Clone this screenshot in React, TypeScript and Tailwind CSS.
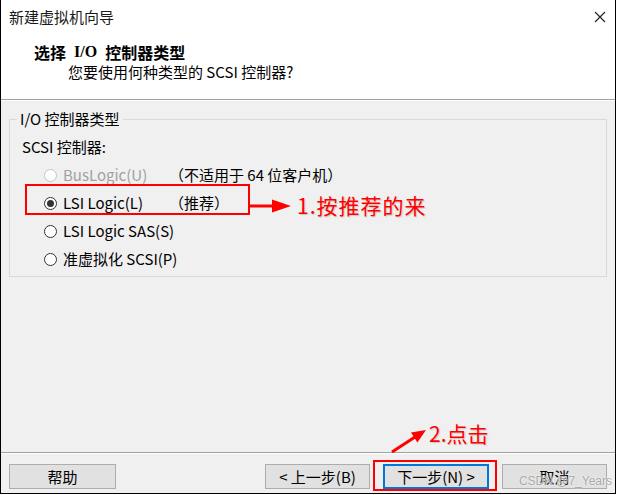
import React from "react";

function Radio({ checked, disabled }: { checked?: boolean; disabled?: boolean }) {
  return (
    <span
      className={`flex h-[13px] w-[13px] shrink-0 items-center justify-center rounded-full border bg-white ${
        disabled ? "border-[#c4c4c4]" : "border-[#333333]"
      }`}
    >
      {checked && <span className="h-[7px] w-[7px] rounded-full bg-[#333333]" />}
    </span>
  );
}

function Option({
  label,
  note,
  checked,
  disabled,
}: {
  label: string;
  note?: string;
  checked?: boolean;
  disabled?: boolean;
}) {
  return (
    <div className="flex h-[28px] items-center whitespace-nowrap pl-[34px]">
      <Radio checked={checked} disabled={disabled} />
      <span
        className={`ml-[6px] w-[106px] shrink-0 ${disabled ? "text-[#a0a0a0]" : "text-black"}`}
      >
        {label}
      </span>
      {note && <span className="text-black">{note}</span>}
    </div>
  );
}

function Button({ children, className }: { children: React.ReactNode; className?: string }) {
  return (
    <button
      type="button"
      className={`flex h-[25px] items-center justify-center bg-[#e1e1e1] text-[15px] text-black ${className}`}
    >
      {children}
    </button>
  );
}

export default function App() {
  return (
    <div className="min-h-screen bg-white">
      <div className="relative flex h-[494px] w-[616px] flex-col border-x border-b border-black bg-[#f0f0f0] font-['Noto_Sans_CJK_SC',sans-serif] text-[15px] leading-[20px]">
        {/* title bar */}
        <div className="flex h-[34px] items-center justify-between bg-white pl-[8px] pr-[9px]">
          <span className="text-[#1a1a1a]">新建虚拟机向导</span>
          <svg width="12" height="12" viewBox="0 0 12 12" className="text-[#222]">
            <path d="M1 1 L11 11 M11 1 L1 11" stroke="currentColor" strokeWidth="1.2" fill="none" />
          </svg>
        </div>

        {/* header */}
        <div className="h-[65px] bg-white pt-[8px]">
          <div className="flex pl-[33px] text-[16px] font-bold text-black">
            <span>选择</span>
            <span className="mx-[8px] font-['Liberation_Serif',serif]">I/O</span>
            <span>控制器类型</span>
          </div>
          <div className="pl-[67px] text-black">您要使用何种类型的 SCSI 控制器?</div>
        </div>
        <div className="h-px bg-[#a0a0a0]" />
        <div className="h-px bg-white" />

        {/* body */}
        <div className="flex-1">
          <fieldset className="mx-[8px] mt-[8px] border border-[#d9d9d9] pb-[3px]">
            <legend className="ml-[7px] px-[3px] text-black">I/O 控制器类型</legend>
            <div className="mt-[4px] flex h-[28px] items-center pl-[12px] text-black">SCSI 控制器:</div>
            <Option label="BusLogic(U)" note="（不适用于 64 位客户机）" disabled />
            <Option label="LSI Logic(L)" note="（推荐）" checked />
            <Option label="LSI Logic SAS(S)" />
            <Option label="准虚拟化 SCSI(P)" />
          </fieldset>
        </div>

        {/* footer */}
        <div className="h-px bg-[#a0a0a0]" />
        <div className="h-px bg-white" />
        <div className="flex h-[39px] items-start pt-[10px]">
          <Button className="ml-[8px] w-[107px] border border-[#adadad]">帮助</Button>
          <div className="flex-1" />
          <Button className="w-[105px] border border-[#adadad]">&lt; 上一步(B)</Button>
          <Button className="ml-[13px] w-[106px] border-2 border-[#0078d7]">下一步(N) &gt;</Button>
          <Button className="ml-[13px] mr-[8px] w-[105px] border border-[#adadad]">取消</Button>
        </div>

        {/* annotations */}
        <div className="absolute left-[24px] top-[184px] h-[31px] w-[225px] border-2 border-[#ff0000]" />
        <svg className="absolute left-[247px] top-[198px]" width="46" height="16" viewBox="0 0 46 16">
          <path d="M0 8 L26 8" stroke="#ff0000" strokeWidth="3" />
          <polygon points="24,1.5 43,8 24,14.5" fill="#ff0000" />
        </svg>
        <div className="absolute left-[296px] top-[191px] text-[21px] leading-[28px] tracking-[1px] text-[#ff0000] [text-shadow:1px_1px_1px_#c8c8c8]">
          1.按推荐的来
        </div>

        <div className="absolute left-[372px] top-[460px] h-[31px] w-[124px] border-2 border-[#ff0000]" />
        <svg className="absolute left-[388px] top-[426px]" width="40" height="30" viewBox="0 0 40 30">
          <path d="M3 26 L26 11" stroke="#ff0000" strokeWidth="3" />
          <polygon points="37,4 28.4,16.6 22,6.6" fill="#ff0000" />
        </svg>
        <div className="absolute left-[428px] top-[419px] text-[21px] leading-[28px] text-[#ff0000] [text-shadow:1px_1px_1px_#c8c8c8]">
          2.点击
        </div>

        <div className="absolute right-[3px] top-[474px] whitespace-nowrap font-['Liberation_Sans',sans-serif] text-[12px] leading-[14px] text-[#aaaaaa] [text-shadow:0_0_2px_#ffffff]">
          CSDN @7_Years
        </div>
      </div>
    </div>
  );
}
